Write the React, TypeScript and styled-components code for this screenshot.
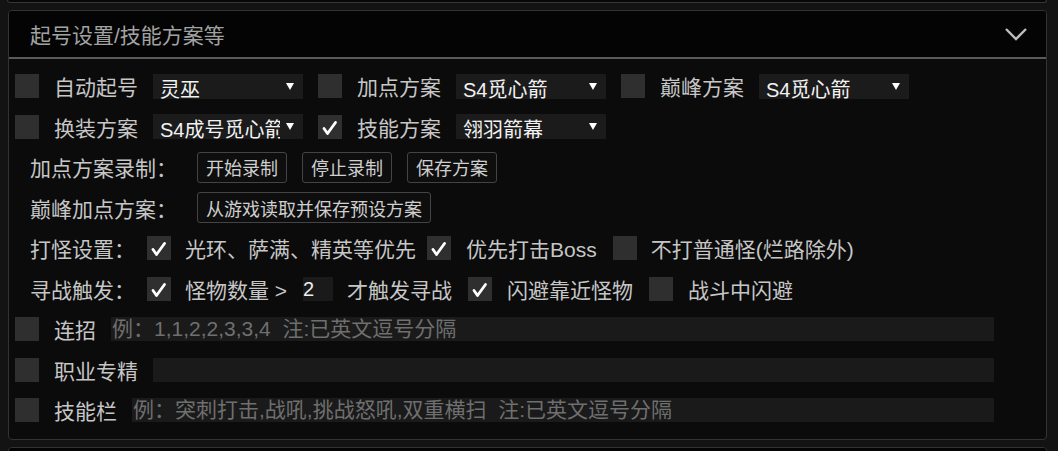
import React from 'react';
import styled, {createGlobalStyle} from 'styled-components';

const GlobalStyle = createGlobalStyle`
  html, body {
    margin: 0;
    padding: 0;
    height: 451px;
    overflow: hidden;
    background: #131313;
    font-family: "Liberation Sans", "Noto Sans CJK SC", sans-serif;
  }
`;

const Page = styled.div`
  display: flex;
  flex-direction: column;
  gap: 7px;
`;

const StubPanel = styled.div`
  margin: 0 11px 0 7px;
  height: 2px;
  border: 1px solid #353535;
  border-top: none;
  border-radius: 0 0 4px 4px;
  background: #070707;
`;

const Panel = styled.section`
  margin: 0 11px 0 8px;
  border: 1px solid #333;
  border-radius: 4px;
  background: #0b0b0b;
  overflow: hidden;
`;

const Header = styled.div`
  height: 46px;
  display: flex;
  align-items: center;
  justify-content: space-between;
  padding: 0 19px 0 21px;
  background: #040404;
  border-bottom: 2px solid #5a5a5a;
  font-size: 21px;
  color: #a2a2a2;
`;

const Body = styled.div`
  padding: 7px 52px 8px 6px;
  display: flex;
  flex-direction: column;
`;

const Row = styled.div<{$indent?: boolean}>`
  height: 40.5px;
  display: flex;
  align-items: center;
  padding-left: ${p => (p.$indent ? '15px' : '0')};
  font-size: 21px;
  color: #c6c6c6;
  white-space: nowrap;
`;

const Box = styled.span<{$gap?: number}>`
  flex: none;
  width: 24px;
  height: 24px;
  background: #2f2f2f;
  display: flex;
  align-items: center;
  justify-content: center;
  margin-right: ${p => p.$gap ?? 15}px;
`;

const Label = styled.span<{$gap?: number}>`
  margin-right: ${p => p.$gap ?? 15}px;
`;

const SelectBox = styled.div`
  flex: none;
  position: relative;
  width: 150px;
  height: 25px;
  margin-right: 15px;
  background: #1b1b1b;
  overflow: hidden;
`;

const SelectText = styled.span`
  display: block;
  width: 120px;
  padding-left: 7px;
  line-height: 32px;
  font-size: 20px;
  color: #f2f2f2;
  overflow: hidden;
`;

const Arrow = styled.svg`
  position: absolute;
  right: 9px;
  top: 9px;
`;

const Button = styled.button`
  height: 31px;
  padding: 0 8px;
  margin-right: 15px;
  border: 1px solid #444;
  border-radius: 3px;
  background: #0e0e0e;
  color: #cfcfcf;
  font-family: inherit;
  font-size: 18px;
`;

const NumberBox = styled.span`
  flex: none;
  width: 30px;
  height: 24px;
  margin-right: 14px;
  background: #1a1a1a;
  color: #eee;
  font-size: 20px;
  line-height: 24px;
`;

const TextInput = styled.input`
  flex: 1;
  height: 24px;
  padding: 0 1px;
  border: none;
  outline: none;
  background: #1a1a1a;
  color: #ddd;
  font-family: inherit;
  font-size: 21px;

  &::placeholder {
    color: #6f6f6f;
  }
`;

function Check({checked, gap}: {checked?: boolean; gap?: number}) {
  return (
    <Box $gap={gap}>
      {checked && (
        <svg width="24" height="24" viewBox="0 0 24 24">
          <path d="M6 13.5 L9.5 18.5 L17.5 7.5" fill="none" stroke="#fff" strokeWidth="2.8"
                strokeLinecap="round" strokeLinejoin="round"/>
        </svg>
      )}
    </Box>
  );
}

function Select({value}: {value: string}) {
  return (
    <SelectBox>
      <SelectText>{value}</SelectText>
      <Arrow width="8" height="7" viewBox="0 0 8 7">
        <polygon points="0,0 8,0 4,7" fill="#fff"/>
      </Arrow>
    </SelectBox>
  );
}

export default function App() {
  return (
    <Page>
      <GlobalStyle/>
      <StubPanel/>
      <Panel>
        <Header>
          <span>起号设置/技能方案等</span>
          <svg width="22" height="14" viewBox="0 0 22 14">
            <polyline points="1,2 11,12 21,2" fill="none" stroke="#bdbdbd" strokeWidth="2.4"/>
          </svg>
        </Header>
        <Body>
          <Row>
            <Check/>
            <Label>自动起号</Label>
            <Select value="灵巫"/>
            <Check/>
            <Label>加点方案</Label>
            <Select value="S4觅心箭"/>
            <Check/>
            <Label>巅峰方案</Label>
            <Select value="S4觅心箭"/>
          </Row>
          <Row>
            <Check/>
            <Label>换装方案</Label>
            <Select value="S4成号觅心箭"/>
            <Check checked/>
            <Label>技能方案</Label>
            <Select value="翎羽箭幕"/>
          </Row>
          <Row $indent>
            <Label $gap={20}>加点方案录制：</Label>
            <Button>开始录制</Button>
            <Button>停止录制</Button>
            <Button>保存方案</Button>
          </Row>
          <Row $indent>
            <Label $gap={20}>巅峰加点方案：</Label>
            <Button>从游戏读取并保存预设方案</Button>
          </Row>
          <Row $indent>
            <Label $gap={12}>打怪设置：</Label>
            <Check checked gap={14}/>
            <Label $gap={11}>光环、萨满、精英等优先</Label>
            <Check checked gap={15}/>
            <Label $gap={16}>优先打击Boss</Label>
            <Check gap={14}/>
            <Label>不打普通怪(烂路除外)</Label>
          </Row>
          <Row $indent>
            <Label $gap={12}>寻战触发：</Label>
            <Check checked gap={14}/>
            <Label $gap={16}>怪物数量 &gt;</Label>
            <NumberBox>2</NumberBox>
            <Label $gap={16}>才触发寻战</Label>
            <Check checked gap={15}/>
            <Label $gap={16}>闪避靠近怪物</Label>
            <Check gap={15}/>
            <Label>战斗中闪避</Label>
          </Row>
          <Row>
            <Check/>
            <Label>连招</Label>
            <TextInput placeholder="例：1,1,2,2,3,3,4  注:已英文逗号分隔"/>
          </Row>
          <Row>
            <Check/>
            <Label>职业专精</Label>
            <TextInput/>
          </Row>
          <Row>
            <Check/>
            <Label>技能栏</Label>
            <TextInput placeholder="例：突刺打击,战吼,挑战怒吼,双重横扫  注:已英文逗号分隔"/>
          </Row>
        </Body>
      </Panel>
      <Panel>
        <Header/>
      </Panel>
    </Page>
  );
}
